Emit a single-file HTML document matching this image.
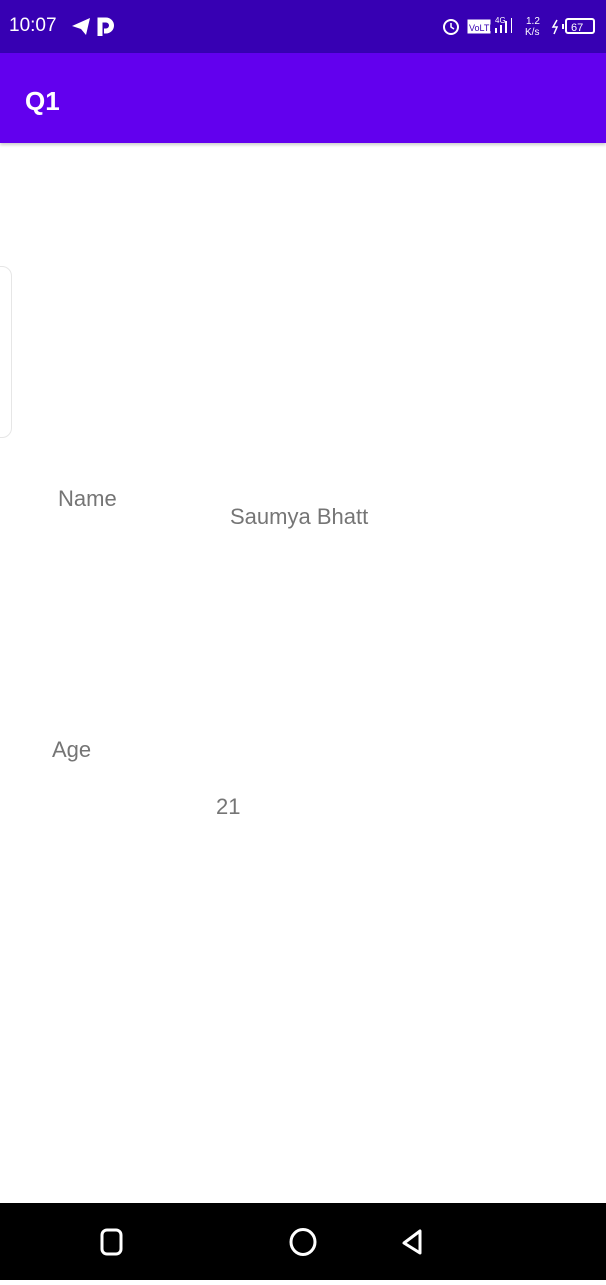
<!DOCTYPE html>
<html><head><meta charset="utf-8"><style>
body{margin:0;width:606px;height:1280px;position:relative;background:#fff;font-family:"Liberation Sans",Roboto,sans-serif;overflow:hidden}
.sb{position:absolute;left:0;top:0;width:606px;height:53px;background:#3700B3;color:#fff}
.tb{position:absolute;left:0;top:53px;width:606px;height:90px;background:#6200EE;box-shadow:0 2px 3px rgba(0,0,0,.2)}
.t{position:absolute;color:#757575;font-size:22px;line-height:26px}
.nav{position:absolute;left:0;top:1203px;width:606px;height:77px;background:#000}
</style></head><body>
<div class="sb">
<div style="position:absolute;left:9px;top:15px;font-size:19px">10:07</div>
<svg style="position:absolute;left:70px;top:16px" width="46" height="22"><path d="M2 10 L20 2 L16 19 L11 13 Z" fill="#fff"/><path d="M30 20 V4 H36 a5 5 0 0 1 0 11 H34" stroke="#fff" stroke-width="5" fill="none"/></svg>
<svg style="position:absolute;left:440px;top:14px" width="160" height="26" fill="none" stroke="#fff">
<circle cx="11" cy="13" r="7" stroke-width="2"/><path d="M11 9v4l3 2" stroke-width="1.5"/>
<rect x="28" y="6" width="22" height="13" fill="#fff"/><text x="29" y="17" font-size="9" fill="#3700B3" stroke="none" font-family="Liberation Sans">VoLTE</text>
<text x="55" y="9" font-size="8" fill="#fff" stroke="none">4G</text>
<rect x="55" y="14" width="2" height="5" fill="#fff" stroke="none"/><rect x="60" y="11" width="2" height="8" fill="#fff" stroke="none"/><rect x="65" y="7" width="2" height="12" fill="#fff" stroke="none"/><rect x="71" y="4" width="1" height="15" fill="#fff" stroke="none"/>
<text x="86" y="10" font-size="10" fill="#fff" stroke="none">1.2</text><text x="85" y="21" font-size="10" fill="#fff" stroke="none">K/s</text>
<path d="M117 6l-4 7h4l-3 7" stroke-width="1.5"/><rect x="122" y="10" width="2" height="5" fill="#fff" stroke="none"/>
<rect x="126" y="5" width="28" height="14" rx="2" stroke-width="2"/><text x="131" y="17" font-size="11" fill="#fff" stroke="none">67</text>
</svg>
</div>
<div class="tb"><div style="position:absolute;left:25px;top:33px;color:#fff;font-size:26px;font-weight:bold">Q1</div></div>
<div style="position:absolute;left:-40px;top:266px;width:50px;height:170px;border:1px solid #e6e6e6;border-radius:10px"></div>
<div class="t" style="left:58px;top:486px">Name</div>
<div class="t" style="left:230px;top:504px">Saumya Bhatt</div>
<div class="t" style="left:52px;top:737px">Age</div>
<div class="t" style="left:216px;top:794px">21</div>
<div class="nav">
<svg width="606" height="77" fill="none" stroke="#fff" stroke-width="3">
<rect x="102" y="27" width="19" height="24" rx="5"/>
<ellipse cx="303" cy="39" rx="12" ry="12.5"/>
<path d="M420 28 L420 50 L404 40 Z" stroke-linejoin="round"/>
</svg>
</div>
</body></html>
